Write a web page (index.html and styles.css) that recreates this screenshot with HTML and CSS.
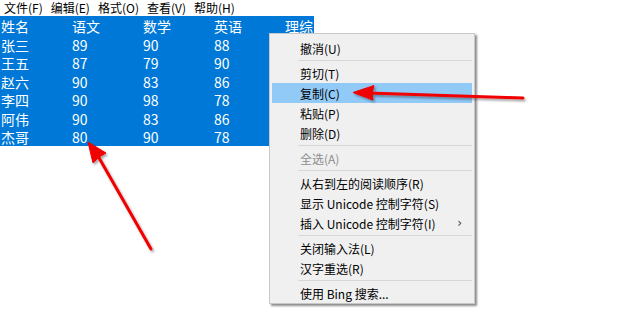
FILE: index.html
```html
<!DOCTYPE html>
<html lang="zh-CN">
<head>
  <meta charset="UTF-8">
  <title>记事本</title>
  <link rel="stylesheet" href="styles.css">
</head>
<body>

<div id="menubar">
  <span>文件(F)</span>
  <span>编辑(E)</span>
  <span>格式(O)</span>
  <span>查看(V)</span>
  <span>帮助(H)</span>
</div>

<div id="editor">
  <div class="line first"><span>姓名</span><span>语文</span><span>数学</span><span>英语</span><span>理综</span></div>
  <div class="line"><span>张三</span><span>89</span><span>90</span><span>88</span></div>
  <div class="line"><span>王五</span><span>87</span><span>79</span><span>90</span></div>
  <div class="line"><span>赵六</span><span>90</span><span>83</span><span>86</span></div>
  <div class="line"><span>李四</span><span>90</span><span>98</span><span>78</span></div>
  <div class="line"><span>阿伟</span><span>90</span><span>83</span><span>86</span></div>
  <div class="line"><span>杰哥</span><span>80</span><span>90</span><span>78</span></div>
</div>

<div id="context">
  <div class="item">撤消(U)</div>
  <div class="sep"></div>
  <div class="item">剪切(T)</div>
  <div class="item active">复制(C)</div>
  <div class="item">粘贴(P)</div>
  <div class="item">删除(D)</div>
  <div class="sep"></div>
  <div class="item disabled">全选(A)</div>
  <div class="sep"></div>
  <div class="item">从右到左的阅读顺序(R)</div>
  <div class="item">显示 Unicode 控制字符(S)</div>
  <div class="item sub">插入 Unicode 控制字符(I)<span class="chev">›</span></div>
  <div class="sep"></div>
  <div class="item">关闭输入法(L)</div>
  <div class="item">汉字重选(R)</div>
  <div class="sep"></div>
  <div class="item">使用 Bing 搜索...</div>
</div>

<svg id="arrows" width="620" height="309" viewBox="0 0 620 309">
  <defs>
    <filter id="shade" x="-20%" y="-20%" width="140%" height="140%">
      <feDropShadow dx="1.5" dy="2" stdDeviation="1.2" flood-color="#000" flood-opacity="0.35"/>
    </filter>
  </defs>
  <g fill="#f00000" stroke="#f00000" filter="url(#shade)">
    <line x1="523" y1="98" x2="368" y2="93" stroke-width="3" stroke-linecap="round"/>
    <polygon points="353,92.5 374,85.5 372,93 373,100" stroke-width="1" stroke-linejoin="round"/>
    <line x1="151" y1="249" x2="98" y2="156" stroke-width="3" stroke-linecap="round"/>
    <polygon points="88,142 106,153 99,157 93,163" stroke-width="1" stroke-linejoin="round"/>
  </g>
</svg>

</body>
</html>
```

FILE: styles.css
```css
body {
  margin: 0;
  padding: 0;
  background: #fff;
  font-family: "Noto Sans CJK SC", "Noto Sans", sans-serif;
  overflow: hidden;
}

#menubar {
  display: flex;
  gap: 8px;
  height: 16px;
  padding-left: 4px;
  font-size: 12px;
  line-height: 16px;
  color: #000;
}

#editor {
  font-size: 14px;
  line-height: 18.57px;
  color: #fff;
}

#editor .line {
  display: grid;
  grid-template-columns: repeat(5, 71px);
  box-sizing: border-box;
  width: 270px;
  height: 18.57px;
  padding: 1px 0 0 1px;
  background: #0078d7;
  overflow: hidden;
  white-space: nowrap;
}

#editor .line.first {
  width: 314px;
}

#context {
  position: absolute;
  left: 269px;
  top: 33px;
  width: 200px;
  padding: 4px 2px 0 2px;
  background: #f0f0f0;
  border: 1px solid #c8c8c8;
  box-shadow: 2px 2px 2px rgba(0, 0, 0, 0.45);
  font-size: 12px;
  color: #000;
}

#context .item {
  display: flex;
  align-items: center;
  height: 20px;
  padding-left: 28px;
  padding-right: 10px;
}

#context .item.active {
  background: #91c9f7;
}

#context .item.disabled {
  color: #8d8d8d;
}

#context .item .chev {
  margin-left: auto;
  color: #444;
  font-family: "DejaVu Sans", sans-serif;
  font-size: 12px;
}

#context .sep {
  height: 5px;
  margin-left: 26px;
  display: flex;
  align-items: center;
}

#context .sep::after {
  content: "";
  display: block;
  width: 100%;
  height: 1px;
  background: #d7d7d7;
}

#arrows {
  position: absolute;
  left: 0;
  top: 0;
  pointer-events: none;
}
```
